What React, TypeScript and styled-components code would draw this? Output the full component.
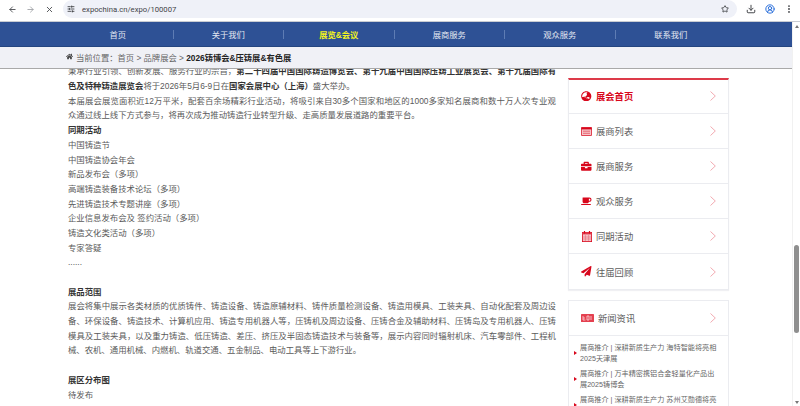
import React from "react";
import styled, { createGlobalStyle } from "styled-components";
import { ArrowLeft, ArrowRight, X, Star, Download, CircleUserRound, EllipsisVertical, SlidersHorizontal } from "lucide-react";
import { FaHome, FaGlobeAsia, FaBriefcase, FaCoffee, FaPaperPlane } from "react-icons/fa";

const Global = createGlobalStyle`
  html, body { margin: 0; padding: 0; height: 406px; overflow: hidden; background: #fff; }
  * { box-sizing: border-box; }
  body { font-family: "Liberation Sans", "Noto Sans CJK SC", sans-serif; }
`;

const Page = styled.div`
  width: 800px; height: 406px; display: flex; flex-direction: column; overflow: hidden;
`;
const Toolbar = styled.header`
  height: 22px; flex: none; display: flex; align-items: flex-start; background: #fff;
  border-bottom: 1px solid #c9ccd2; padding-left: 3px; color: #444;
`;
const NavButton = styled.span<{ $dim?: boolean }>`
  width: 18.5px; height: 18px; display: flex; align-items: center; justify-content: center; flex: none;
  color: ${p => (p.$dim ? "#a2a4a8" : "#4a4c50")};
`;
const Omnibox = styled.div`
  margin-left: 4.5px; width: 674px; height: 18px; background: #eff1f8; border-radius: 9px;
  display: flex; align-items: center; padding: 0 8px 0 4px; color: #3d4043;
`;
const Url = styled.span`
  margin-left: 7px; font-size: 7.7px; flex: 1; color: #3f4247; white-space: nowrap;
  font-family: "Roboto", "Liberation Sans", sans-serif;
`;
const ToolIcons = styled.div`
  display: flex; margin-left: 4.5px; align-items: center; height: 18px;
`;
const ToolIcon = styled.span<{ $blue?: boolean }>`
  width: 19px; display: flex; justify-content: center; color: ${p => (p.$blue ? "#2a6fdb" : "#46484c")};
`;

const Below = styled.div`
  flex: 1; min-height: 0; display: flex;
`;
const Main = styled.div`
  flex: 1; min-width: 0; display: flex; flex-direction: column;
`;
const Nav = styled.nav`
  height: 25px; flex: none; background: #2e5195; border-bottom: 1px solid #24457f; padding-left: 63px;
  display: flex; align-items: center;
`;
const NavItem = styled.a<{ $active?: boolean; $last?: boolean }>`
  width: 110.5px; height: 9px; display: flex; align-items: center; justify-content: center;
  font-size: 8.3px; color: ${p => (p.$active ? "#f5f520" : "#e3e8f2")}; font-weight: ${p => (p.$active ? 700 : 400)};
  border-right: ${p => (p.$last ? "none" : "1px solid #5e7cb4")};
`;
const Crumbs = styled.div`
  height: 22px; flex: none; background: #f0f1f6; border-bottom: 1px solid #a9a9a9; padding: 0 0 2px 66px;
  display: flex; align-items: center; font-size: 8.3px; color: #666; white-space: pre;
`;
const HomeIcon = styled(FaHome)`
  width: 7px; height: 7px; color: #444; margin-right: 3px;
`;
const CrumbNow = styled.b`
  color: #222;
`;
const Content = styled.div`
  flex: 1; min-height: 0; overflow: hidden; padding-left: 68px; display: flex; gap: 12px; align-items: flex-start;
`;
const Article = styled.article`
  width: 488px; flex: none; margin-top: -4.6px; font-size: 8.4px; line-height: 14.68px; color: #5a5a5a;
`;
const Para = styled.p<{ $gap?: boolean }>`
  margin: 0 0 ${p => (p.$gap ? "14.68px" : "0")}; text-align: justify;
`;
const Heading = styled.h3`
  margin: 0; font-size: 8.4px; font-weight: 700; color: #333; line-height: 14.68px;
`;
const Strong = styled.b`
  color: #333;
`;
const Side = styled.aside`
  width: 161px; flex: none; padding-top: 9px; display: flex; flex-direction: column; gap: 10px;
`;
const Menu = styled.ul`
  margin: 0; padding: 0; list-style: none; border: 1px solid #ebecf0; border-top: 2px solid #dd3a49;
  box-shadow: 0 1px 1px #f0f0f3;
`;
const MenuRow = styled.li<{ $active?: boolean; $first?: boolean }>`
  height: 35px; display: flex; align-items: center; padding: 0 12px;
  margin-top: ${p => (p.$first ? "-1px" : "0")};
  border-bottom: 1px solid #ebecf0; font-size: 9.3px;
  color: ${p => (p.$active ? "#d8071c" : "#5e5e5e")}; font-weight: ${p => (p.$active ? 700 : 400)};
  &:last-child { border-bottom: none; }
`;
const MenuGlyph = styled.span`
  width: 11px; margin-right: 4px; display: flex; justify-content: center; color: #d8071c; font-size: 10.5px;
`;
const MenuLabel = styled.span`
  flex: 1;
`;
const Chevron = styled.svg`
  width: 6px; height: 10px; fill: none; stroke: #f0a0a8; stroke-width: 0.9; flex: none;
`;
const NewsBox = styled.section`
  border: 1px solid #ebecf0;
`;
const NewsHead = styled.div`
  height: 35px; display: flex; align-items: center; padding: 0 12px; font-size: 9.3px; color: #5e5e5e;
  border-bottom: 1px solid #ebecf0;
`;
const NewsGlyph = styled.span`
  width: 13px; margin-right: 4px; display: flex; justify-content: center;
`;
const NewsList = styled.ul`
  margin: 0; padding: 7px 8px 0 11px; list-style: none; display: flex; flex-direction: column; gap: 5px;
`;
const NewsItem = styled.li`
  font-size: 7.15px; line-height: 10.5px; color: #666; position: relative;
  &::before {
    content: ""; position: absolute; left: -6.5px; top: 8px; border-left: 3px solid #d8071c;
    border-top: 2px solid transparent; border-bottom: 2px solid transparent;
  }
`;
const Scrollbar = styled.div`
  width: 8px; flex: none; display: flex; flex-direction: column; align-items: center; background: #fff;
  border-left: 1px solid #f1f1f1;
`;
const Arrow = styled.span<{ $down?: boolean }>`
  flex: none; margin: ${p => (p.$down ? "0 0 2px" : "3px 0 0")}; border-left: 2.5px solid transparent; border-right: 2.5px solid transparent;
  border-bottom: ${p => (p.$down ? "none" : "3px solid #777")};
  border-top: ${p => (p.$down ? "3px solid #777" : "none")};
`;
const Track = styled.div`
  flex: 1; width: 100%; padding: 217px 1px 0;
`;
const Thumb = styled.div`
  height: 88px; background: #8f8f8f; border-radius: 3px;
`;

const Chev = () => (
  <Chevron viewBox="0 0 6 10"><polyline points="0.5,0.5 5.3,5 0.5,9.5" /></Chevron>
);

const ListIcon = () => (
  <svg width="11" height="9" viewBox="0 0 11 9">
    <rect x="0.4" y="0.4" width="10.2" height="8.2" rx="0.6" fill="#f6c3c8" stroke="#d8071c" strokeWidth="0.8" />
    <rect x="0.4" y="0.4" width="10.2" height="2" fill="#d8071c" />
    <path d="M2 4.2h7M2 6.3h7" stroke="#e4505e" strokeWidth="0.8" />
  </svg>
);
const CalendarIcon = () => (
  <svg width="10" height="11" viewBox="0 0 10 11">
    <rect x="0.4" y="1.4" width="9.2" height="9.2" fill="#f5c1c6" stroke="#d8071c" strokeWidth="0.8" />
    <rect x="0.4" y="1.4" width="9.2" height="2" fill="#e0384a" />
    <path d="M2.5 0v2.5M7.5 0v2.5" stroke="#d8071c" strokeWidth="1.2" />
    <path d="M3.4 4v6M6.6 4v6M1 6h8M1 8h8" stroke="#e4606e" strokeWidth="0.5" />
  </svg>
);
const NewsIcon = () => (
  <svg width="13" height="8" viewBox="0 0 13 8">
    <rect width="13" height="8" rx="0.6" fill="#e4404f" />
    <path d="M2 2v4h2.4M2 4h2M6 2h2v4H6zM10 2v4" stroke="#fbd9dc" strokeWidth="0.8" fill="none" />
  </svg>
);

const navs = ["首页", "关于我们", "展览&会议", "展商服务", "观众服务", "联系我们"];
const menus: [string, React.ReactNode][] = [
  ["展会首页", <FaGlobeAsia />],
  ["展商列表", <ListIcon />],
  ["展商服务", <FaBriefcase />],
  ["观众服务", <FaCoffee />],
  ["同期活动", <CalendarIcon />],
  ["往届回顾", <FaPaperPlane />],
];
const events = ["中国铸造节", "中国铸造协会年会", "新品发布会（多项）", "高端铸造装备技术论坛（多项）", "先进铸造技术专题讲座（多项）", "企业信息发布会及 签约活动（多项）", "铸造文化类活动（多项）", "专家答疑"];
const news = [
  "展商推介 | 深耕新质生产力 海特智能将亮相2025天津展",
  "展商推介 | 万丰精密携铝合金轻量化产品出展2025铸博会",
  "展商推介 | 深耕新质生产力 苏州艾勋德将亮相2025铸博会",
];

export default function App() {
  return (
    <Page>
      <Global />
      <Toolbar>
        <NavButton><ArrowLeft size={9} strokeWidth={2.4} /></NavButton>
        <NavButton $dim><ArrowRight size={9} strokeWidth={2.4} /></NavButton>
        <NavButton><X size={9} strokeWidth={2.4} /></NavButton>
        <Omnibox>
          <SlidersHorizontal size={8} strokeWidth={2.6} />
          <Url>expochina.cn/expo/100007</Url>
          <Star size={8} strokeWidth={2.6} />
        </Omnibox>
        <ToolIcons>
          <ToolIcon><Download size={10} strokeWidth={2.4} /></ToolIcon>
          <ToolIcon $blue><CircleUserRound size={10} strokeWidth={2.4} /></ToolIcon>
          <ToolIcon><EllipsisVertical size={10} strokeWidth={2.6} /></ToolIcon>
        </ToolIcons>
      </Toolbar>
      <Below>
        <Main>
          <Nav>
            {navs.map((n, i) => (
              <NavItem key={n} $active={i === 2} $last={i === navs.length - 1}>{n}</NavItem>
            ))}
          </Nav>
          <Crumbs>
            <HomeIcon />当前位置：首页 &gt; 品牌展会 &gt; <CrumbNow>2026铸博会&amp;压铸展&amp;有色展</CrumbNow>
          </Crumbs>
          <Content>
            <Article>
              <Para>秉承行业引领、创新发展、服务行业的宗旨，<Strong>第二十四届中国国际铸造博览会、第十九届中国国际压铸工业展览会、第十九届国际有色及特种铸造展览会</Strong>将于2026年5月6-9日在<Strong>国家会展中心（上海）</Strong>盛大举办。</Para>
              <Para>本届展会展览面积近12万平米，配套百余场精彩行业活动，将吸引来自30多个国家和地区的1000多家知名展商和数十万人次专业观众通过线上线下方式参与，将再次成为推动铸造行业转型升级、走高质量发展道路的重要平台。</Para>
              <Heading>同期活动</Heading>
              {events.map(e => <Para key={e}>{e}</Para>)}
              <Para $gap>......</Para>
              <Heading>展品范围</Heading>
              <Para $gap>展会将集中展示各类材质的优质铸件、铸造设备、铸造原辅材料、铸件质量检测设备、铸造用模具、工装夹具、自动化配套及周边设备、环保设备、铸造技术、计算机应用、铸造专用机器人等，压铸机及周边设备、压铸合金及辅助材料、压铸岛及专用机器人、压铸模具及工装夹具，以及重力铸造、低压铸造、差压、挤压及半固态铸造技术与装备等，展示内容同时辐射机床、汽车零部件、工程机械、农机、通用机械、内燃机、轨道交通、五金制品、电动工具等上下游行业。</Para>
              <Heading>展区分布图</Heading>
              <Para>待发布</Para>
            </Article>
            <Side>
              <Menu>
                {menus.map(([label, icon], i) => (
                  <MenuRow key={label} $active={i === 0} $first={i === 0}>
                    <MenuGlyph>{icon}</MenuGlyph>
                    <MenuLabel>{label}</MenuLabel>
                    <Chev />
                  </MenuRow>
                ))}
              </Menu>
              <NewsBox>
                <NewsHead>
                  <NewsGlyph><NewsIcon /></NewsGlyph>
                  <MenuLabel>新闻资讯</MenuLabel>
                  <Chev />
                </NewsHead>
                <NewsList>
                  {news.map(n => <NewsItem key={n}>{n}</NewsItem>)}
                </NewsList>
              </NewsBox>
            </Side>
          </Content>
        </Main>
        <Scrollbar>
          <Arrow />
          <Track><Thumb /></Track>
          <Arrow $down />
        </Scrollbar>
      </Below>
    </Page>
  );
}
